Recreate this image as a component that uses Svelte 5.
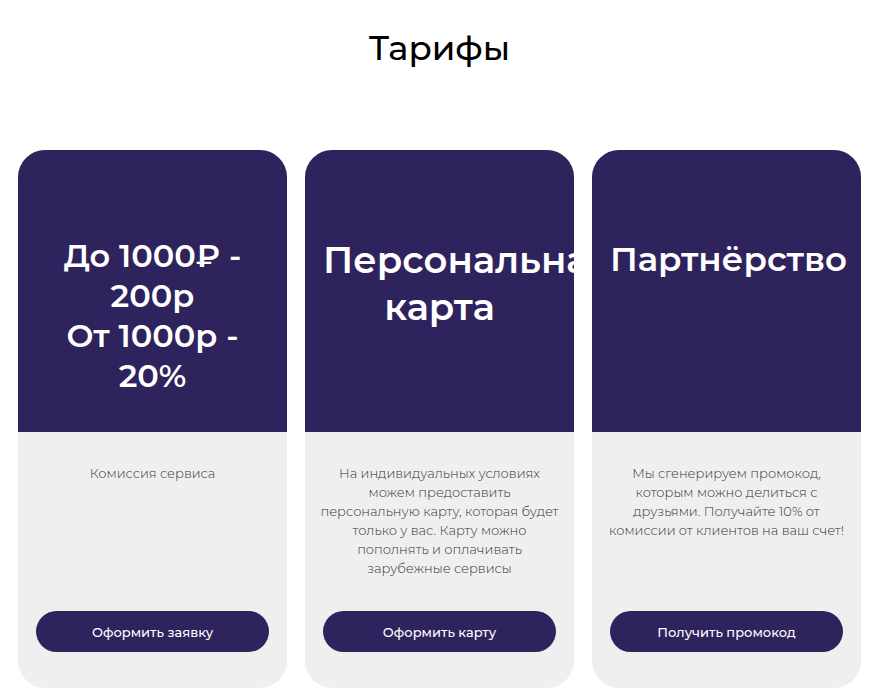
<script>
  const plans = [
    {
      size: 'small',
      title: ['До 1000₽ -', '200р', 'От 1000р -', '20%'],
      text: ['Комиссия сервиса'],
      action: 'Оформить заявку',
    },
    {
      size: 'large',
      title: ['Персональная', 'карта'],
      text: [
        'На индивидуальных условиях',
        'можем предоставить',
        'персональную карту, которая будет',
        'только у вас. Карту можно',
        'пополнять и оплачивать',
        'зарубежные сервисы',
      ],
      action: 'Оформить карту',
    },
    {
      size: 'medium',
      title: ['Партнёрство'],
      text: [
        'Мы сгенерируем промокод,',
        'которым можно делиться с',
        'друзьями. Получайте 10% от',
        'комиссии от клиентов на ваш счет!',
      ],
      action: 'Получить промокод',
    },
  ];
</script>

<main>
  <h1>Тарифы</h1>
  <div class="plans">
    {#each plans as plan}
      <article>
        <header>
          <h2 class={plan.size}>
            {#each plan.title as line, i}{#if i}<br />{/if}{line}{/each}
          </h2>
        </header>
        <div class="details">
          <p>
            {#each plan.text as line, i}{#if i}{' '}<br />{/if}{line}{/each}
          </p>
          <button type="button">{plan.action}</button>
        </div>
      </article>
    {/each}
  </div>
</main>

<style>
  :global(body) {
    margin: 0;
    background: #fff;
  }
  main {
    padding: 24px 17px 12px 18px;
    font-family: Montserrat, Inter, 'Open Sans', sans-serif;
    text-align: center;
  }
  h1 {
    margin: 0 0 78px;
    font-size: 34px;
    line-height: 48px;
    font-weight: 500;
    color: #000;
  }
  .plans {
    display: grid;
    grid-template-columns: repeat(3, minmax(0, 1fr));
    gap: 18px;
  }
  article {
    display: flex;
    flex-direction: column;
    overflow: hidden;
    border-radius: 27px;
    background: #efefef;
  }
  header {
    box-sizing: border-box;
    min-height: 282px;
    padding: 86px 18px 36px;
    background: #2e235c;
    color: #fff;
  }
  h2 {
    margin: 0;
    font-weight: 600;
    white-space: nowrap;
  }
  .small {
    font-size: 32px;
    line-height: 40px;
  }
  .medium {
    font-size: 34px;
    line-height: 46px;
  }
  .large {
    font-size: 37px;
    line-height: 47px;
  }
  .details {
    display: flex;
    flex: 1;
    flex-direction: column;
    padding: 32px 18px 36px;
  }
  p {
    flex: 1;
    margin: 0 -4px 33px;
    font-size: 13px;
    line-height: 19px;
    font-weight: 300;
    color: #333;
    white-space: nowrap;
  }
  button {
    min-height: 41px;
    padding: 0 16px;
    border: 0;
    border-radius: 21px;
    background: #2e235c;
    color: #fff;
    font: inherit;
    font-size: 13px;
    font-weight: 500;
    cursor: pointer;
  }
</style>
